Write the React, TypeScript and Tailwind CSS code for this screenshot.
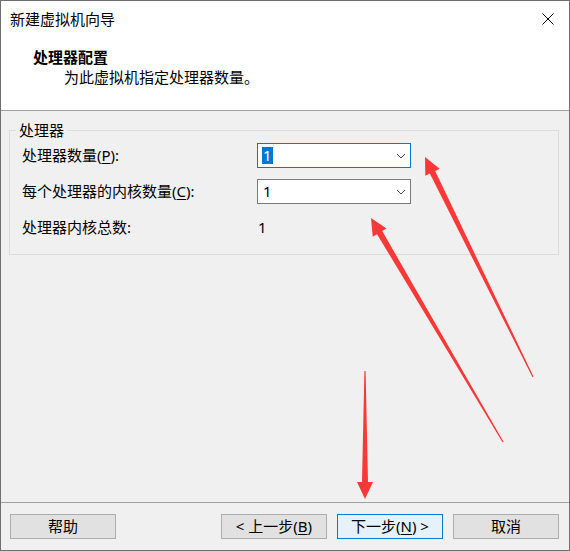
import React from "react";

const arrows = [
  { x1: 533, y1: 377, x2: 425, y2: 157 },
  { x1: 503, y1: 442, x2: 371, y2: 218 },
  { x1: 365, y1: 371, x2: 365, y2: 499 },
];

function arrowPoints(a: { x1: number; y1: number; x2: number; y2: number }) {
  const len = Math.hypot(a.x2 - a.x1, a.y2 - a.y1);
  const dx = (a.x2 - a.x1) / len;
  const dy = (a.y2 - a.y1) / len;
  const nx = -dy;
  const ny = dx;
  const head = 17;
  const hw = 8;
  const sw = 3;
  const tw = 0.6;
  const bx = a.x2 - dx * head;
  const by = a.y2 - dy * head;
  const pts = [
    [a.x1 + nx * tw, a.y1 + ny * tw],
    [bx + nx * sw, by + ny * sw],
    [bx + nx * hw, by + ny * hw],
    [a.x2, a.y2],
    [bx - nx * hw, by - ny * hw],
    [bx - nx * sw, by - ny * sw],
    [a.x1 - nx * tw, a.y1 - ny * tw],
  ];
  return pts.map((p) => p.join(",")).join(" ");
}

function Chevron() {
  return (
    <svg width="10" height="6" viewBox="0 0 10 6" className="mr-[4px]">
      <path d="M1 1 L5 5 L9 1" fill="none" stroke="#505050" strokeWidth="1" />
    </svg>
  );
}

function Combo({ focused, children }: { focused?: boolean; children: React.ReactNode }) {
  return (
    <div
      className={
        "w-[154px] h-[25px] bg-white flex items-center justify-between pl-[4px] border " +
        (focused ? "border-[#0078d7]" : "border-[#7a7a7a]")
      }
    >
      <div className="flex items-center">{children}</div>
      <Chevron />
    </div>
  );
}

function Btn({ primary, children }: { primary?: boolean; children: React.ReactNode }) {
  return (
    <button
      className={
        "w-[106px] h-[25px] flex items-center justify-center border text-[15px] leading-none text-black " +
        (primary ? "border-[#0078d7] bg-[#e5f1fb]" : "border-[#adadad] bg-[#e1e1e1]")
      }
    >
      {children}
    </button>
  );
}

export default function App() {
  return (
    <div className="relative w-[570px] h-[551px] border border-[#6f6f6f] bg-[#f0f0f0] flex flex-col text-black font-['Noto_Sans','Noto_Sans_CJK_SC',sans-serif] text-[15px]">
      {/* header */}
      <div className="h-[110px] bg-white border-b border-[#a0a0a0] shrink-0">
        <div className="flex items-center justify-between pl-[9px] pr-[15px] pt-[8px]">
          <span className="leading-[20px]">新建虚拟机向导</span>
          <svg width="12" height="12" viewBox="0 0 12 12">
            <path d="M0.5 0.5 L11.5 11.5 M11.5 0.5 L0.5 11.5" stroke="#000" strokeWidth="1" />
          </svg>
        </div>
        <div className="pl-[32px] mt-[18px] leading-[20px] font-bold">处理器配置</div>
        <div className="pl-[63px] leading-[20px]">为此虚拟机指定处理器数量。</div>
      </div>

      {/* body */}
      <div className="flex-1 px-[8px] pt-[10px]">
        <fieldset className="w-[550px] border border-[#dcdcdc] pt-[4px] pb-[14px]">
          <legend className="ml-[6px] px-[3px] leading-[18px]">处理器</legend>
          <div className="grid grid-cols-[235px_154px] gap-y-[11px] items-center pl-[12px]">
            <span className="leading-[25px]">
              处理器数量(<span className="underline underline-offset-2">P</span>):
            </span>
            <Combo focused>
              <span className="bg-[#0078d7] text-white leading-[17px] px-[1px]">1</span>
            </Combo>
            <span className="leading-[25px]">
              每个处理器的内核数量(<span className="underline underline-offset-2">C</span>):
            </span>
            <Combo>
              <span className="pl-[1px] leading-[17px]">1</span>
            </Combo>
            <span className="leading-[25px]">处理器内核总数:</span>
            <span className="leading-[25px] pl-[1px]">1</span>
          </div>
        </fieldset>
      </div>

      {/* footer */}
      <div className="h-[48px] shrink-0 border-t border-[#a0a0a0] pt-[11px] pl-[9px] pr-[10px] flex items-start">
        <Btn>帮助</Btn>
        <div className="ml-auto flex gap-[10px]">
          <Btn>
            &lt; 上一步(<span className="underline underline-offset-2">B</span>)
          </Btn>
          <Btn primary>
            下一步(<span className="underline underline-offset-2">N</span>) &gt;
          </Btn>
          <Btn>取消</Btn>
        </div>
      </div>

      {/* red annotation arrows */}
      <svg
        className="absolute left-[-1px] top-[-1px] pointer-events-none"
        width="570"
        height="551"
        viewBox="0 0 570 551"
      >
        {arrows.map((a, i) => (
          <polygon key={i} points={arrowPoints(a)} fill="#f93838" />
        ))}
      </svg>
    </div>
  );
}
